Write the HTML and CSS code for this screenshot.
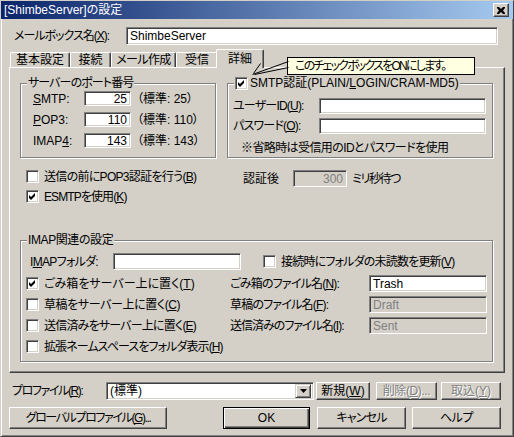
FILE: index.html
```html
<!DOCTYPE html>
<html lang="ja">
<head>
<meta charset="utf-8">
<title>[ShimbeServer]の設定</title>
<link rel="stylesheet" href="styles.css">
</head>
<body>
<div class="window">
  <div class="titlebar">
    <span class="title">[ShimbeServer]の設定</span>
    <span class="close"><svg width="8" height="7" viewBox="0 0 8 7"><path d="M0 0h2l2 2 2-2h2v1l-2 2.5 2 2.5v1h-2l-2-2-2 2h-2v-1l2-2.5-2-2.5z" fill="#000"/></svg></span>
  </div>
  <div class="content">
    <div class="mailbox">
      <span class="lbl-mailbox">メールボックス名(<u>X</u>):</span>
      <div class="input w-mailbox">ShimbeServer</div>
    </div>
    <div class="tabs">
      <div class="tab t-kihon">基本設定</div>
      <div class="tab t-setsu">接続</div>
      <div class="tab t-mail">メール作成</div>
      <div class="tab t-jushin">受信</div>
      <div class="tab sel t-shousai">詳細</div>
    </div>
    <div class="panel">
      <div class="groups">
        <div class="group g-port">
          <div class="legend ls-9">サーバーのポート番号</div>
          <div class="port-rows">
            <div class="prow"><span class="plabel"><u>S</u>MTP:</span><div class="input num">25</div><span class="std">（標準: 25）</span></div>
            <div class="prow"><span class="plabel"><u>P</u>OP3:</span><div class="input num">110</div><span class="std">（標準: 110）</span></div>
            <div class="prow"><span class="plabel">IMAP<u>4</u>:</span><div class="input num">143</div><span class="std">（標準: 143）</span></div>
          </div>
        </div>
        <div class="group g-auth">
          <div class="legend legend-cb"><span class="cb"><svg width="13" height="13" viewBox="0 0 13 13"><path d="M3 5l2 2 4-4v3l-4 4-2-2z" fill="#000"/></svg></span><span class="cbtext">SMTP認証(PLAIN/<u>L</u>OGIN/CRAM-MD5)</span></div>
          <div class="auth-rows">
            <div class="arow"><span class="alabel ls-8">ユーザーID(<u>U</u>):</span><div class="input w-auth"></div></div>
            <div class="arow"><span class="alabel ls-8">パスワード(<u>O</u>):</span><div class="input w-auth"></div></div>
          </div>
          <div class="note ls-6">※省略時は受信用のIDとパスワードを使用</div>
        </div>
      </div>

      <div class="pop-row">
        <div class="pop-left"><span class="cb"></span><span class="cbtext ls-7">送信の前にPOP3認証を行う(<u>B</u>)</span></div>
        <span class="after-lbl">認証後</span>
        <div class="input disabled num w-ms">300</div>
        <span class="ms ls-14">ミリ秒待つ</span>
      </div>
      <div class="esmtp-row"><span class="cb"><svg width="13" height="13" viewBox="0 0 13 13"><path d="M3 5l2 2 4-4v3l-4 4-2-2z" fill="#000"/></svg></span><span class="cbtext ls-9">ESMTPを使用(<u>K</u>)</span></div>

      <div class="group g-imap">
        <div class="legend ls-4">IMAP関連の設定</div>
        <div class="irow irow-first">
          <span class="ilabel ls-7">I<u>M</u>APフォルダ:</span>
          <div class="input w-folder"></div>
          <span class="cb cb-unread"></span><span class="cbtext ls-8">接続時にフォルダの未読数を更新(<u>V</u>)</span>
        </div>
        <div class="irow">
          <div class="icheck"><span class="cb"><svg width="13" height="13" viewBox="0 0 13 13"><path d="M3 5l2 2 4-4v3l-4 4-2-2z" fill="#000"/></svg></span><span class="cbtext">ごみ箱をサーバー上に置く(<u>T</u>)</span></div>
          <span class="flabel ls-8">ごみ箱のファイル名(<u>N</u>):</span>
          <div class="input w-file">Trash</div>
        </div>
        <div class="irow">
          <div class="icheck"><span class="cb"></span><span class="cbtext ls-4">草稿をサーバー上に置く(<u>C</u>)</span></div>
          <span class="flabel ls-8">草稿のファイル名(<u>F</u>):</span>
          <div class="input disabled w-file">Draft</div>
        </div>
        <div class="irow">
          <div class="icheck"><span class="cb"></span><span class="cbtext ls-8">送信済みをサーバー上に置く(<u>E</u>)</span></div>
          <span class="flabel ls-10">送信済みのファイル名(<u>I</u>):</span>
          <div class="input disabled w-file">Sent</div>
        </div>
        <div class="irow irow-last">
          <div class="icheck"><span class="cb"></span><span class="cbtext ls-9">拡張ネームスペースをフォルダ表示(<u>H</u>)</span></div>
        </div>
      </div>
    </div>

    <div class="profile-row">
      <span class="prof-lbl ls-14">プロファイル(<u>R</u>):</span>
      <div class="input combo"><span class="combo-text">(標準)</span><span class="combo-btn"><svg width="7" height="4" viewBox="0 0 7 4"><path d="M0 0h7l-3.5 4z" fill="#000"/></svg></span></div>
      <div class="btn b-new">新規(<u>W</u>)</div>
      <div class="btn dis b-del ls-4">削除(<u>D</u>)...</div>
      <div class="btn dis b-imp">取込(<u>Y</u>)</div>
    </div>
    <div class="button-row">
      <div class="btn b-global ls-14">グローバルプロファイル(<u>G</u>)...</div>
      <div class="btn default b-ok">OK</div>
      <div class="btn b-cancel ls-8">キャンセル</div>
      <div class="btn b-help ls-4">ヘルプ</div>
    </div>
  </div>

  <div class="tooltip">このチェックボックスをONにします。</div>
  <svg class="pointer" width="44" height="20" viewBox="0 0 44 20">
    <path d="M40.5 3.5L4.5 16.5M40.5 9.5L6.5 16.5M12.5 5.5L5.5 15.5" stroke="#000" stroke-width="1" fill="none"/>
  </svg>
</div>
</body>
</html>
```

FILE: styles.css
```css
* { box-sizing: border-box; }
html, body { margin: 0; padding: 0; }
body {
  width: 514px;
  height: 437px;
  overflow: hidden;
  background: #d4d0c8;
  font-family: "Liberation Sans", "Noto Sans CJK JP", sans-serif;
  font-size: 12px;
  line-height: 14px;
  color: #000;
  font-feature-settings: "palt";
}
u { text-decoration: underline; text-underline-offset: 1px; text-decoration-thickness: 1px; }

/* letter-spacing tweaks to approximate the narrow bitmap UI font */
.ls-4 { letter-spacing: -0.4px; }
.ls-6 { letter-spacing: -0.6px; }
.ls-7 { letter-spacing: -0.7px; }
.ls-8 { letter-spacing: -0.8px; }
.ls-9 { letter-spacing: -0.9px; }
.ls-10 { letter-spacing: -1px; }
.ls-14 { letter-spacing: -1.4px; }

.window {
  position: relative;
  width: 514px;
  height: 437px;
  background: #d4d0c8;
  border: 1px solid;
  border-color: #d4d0c8 #404040 #404040 #d4d0c8;
  box-shadow: inset 1px 1px #fff, inset -1px -1px #808080;
}

/* title bar */
.titlebar {
  height: 18px;
  display: flex;
  align-items: center;
  justify-content: space-between;
  padding: 0 4px 0 3px;
  background: linear-gradient(to right, #0a246a, #a6caf0);
  color: #fff;
}
.title { white-space: nowrap; }
.close {
  width: 16px;
  height: 14px;
  background: #d4d0c8;
  border: 1px solid;
  border-color: #fff #404040 #404040 #fff;
  box-shadow: inset -1px -1px #808080;
  display: flex;
  align-items: center;
  justify-content: center;
}

.content { padding: 0 8px; }

/* mailbox */
.mailbox { display: flex; align-items: center; margin-top: 8px; height: 18px; }
.lbl-mailbox { margin-left: 5px; width: 112px; white-space: nowrap; letter-spacing: -1px; }
.w-mailbox { width: 372px; height: 18px; }

/* generic sunken input */
.input {
  background: #fff;
  border: 1px solid;
  border-color: #808080 #fff #fff #808080;
  box-shadow: inset 1px 1px #404040, inset -1px -1px #d4d0c8;
  padding: 0 3px;
  display: flex;
  align-items: center;
  white-space: nowrap;
  overflow: hidden;
  flex: none;
}
.input.num { justify-content: flex-end; }
.input.disabled { background: #d4d0c8; color: #808080; }

/* tabs */
.tabs { display: flex; height: 18px; margin-top: 4px; margin-left: 1px; align-items: flex-start; }
.tab {
  height: 15px;
  margin-top: 3px;
  border-top: 1px solid #fff;
  border-left: 1px solid #fff;
  border-right: 1px solid #404040;
  box-shadow: inset -1px 0 #808080;
  border-radius: 2px 2px 0 0;
  display: flex;
  justify-content: center;
  align-items: center;
  white-space: nowrap;
  background: #d4d0c8;
  flex: none;
}
.t-kihon { width: 60px; }
.t-setsu { width: 41px; }
.t-mail { width: 65px; letter-spacing: -0.6px; }
.t-jushin { width: 42px; }
.tab.sel {
  position: relative;
  z-index: 1;
  width: 48px;
  height: 19px;
  margin-top: 0;
  margin-left: -2px;
  align-items: flex-start;
  padding-top: 2px;
}

/* panel */
.panel {
  width: 496px;
  height: 306px;
  border-top: 1px solid #fff;
  border-left: 1px solid #fff;
  border-right: 1px solid #404040;
  border-bottom: 1px solid #404040;
  box-shadow: inset -1px -1px #808080;
  padding: 0 10px;
}

/* group box */
.group {
  border: 1px solid #808080;
  box-shadow: inset 1px 1px #fff, 1px 1px #fff;
}
.legend {
  height: 14px;
  margin: -8px 0 0 6px;
  padding: 0 1px;
  width: max-content;
  background: #d4d0c8;
  display: flex;
  align-items: center;
  white-space: nowrap;
}
.groups { display: flex; gap: 11px; margin-top: 15px; }
.g-port { width: 196px; height: 75px; }
.g-auth { width: 266px; height: 75px; }

.port-rows { display: flex; flex-direction: column; gap: 6px; margin-top: 1px; padding-left: 12px; }
.prow { display: flex; align-items: center; height: 15px; }
.plabel { width: 51px; }
.prow .input { width: 47px; height: 15px; }
.std { margin-left: 6px; white-space: nowrap; }

.legend-cb { gap: 2px; }
.auth-rows { display: flex; flex-direction: column; gap: 4px; margin-top: 8px; padding-left: 5px; }
.arow { display: flex; align-items: center; height: 16px; }
.alabel { width: 86px; white-space: nowrap; }
.w-auth { width: 167px; height: 16px; }
.note { margin-top: 7px; padding-left: 13px; height: 14px; white-space: nowrap; }

/* checkbox */
.cb {
  width: 13px;
  height: 13px;
  flex: none;
  background: #fff;
  border: 1px solid;
  border-color: #808080 #fff #fff #808080;
  box-shadow: inset 1px 1px #404040, inset -1px -1px #d4d0c8;
  position: relative;
  display: block;
}
.cb svg { position: absolute; left: -1px; top: -1px; }
.cbtext { white-space: nowrap; }

.pop-row { display: flex; align-items: center; height: 17px; margin-top: 12px; padding-left: 6px; }
.pop-left { width: 217px; height: 13px; align-self: flex-start; display: flex; align-items: center; gap: 5px; }
.after-lbl { width: 50px; }
.w-ms { width: 54px; height: 17px; }
.ms { margin-left: 5px; white-space: nowrap; }

.esmtp-row { display: flex; align-items: center; gap: 5px; height: 13px; margin-top: 3px; padding-left: 6px; }

/* IMAP group */
.g-imap { width: 473px; height: 122px; margin-top: 37px; }
.irow { display: flex; align-items: center; height: 17px; margin-top: 4px; padding-left: 5px; }
.irow-first { margin-top: 6px; }
.irow-first + .irow { margin-top: 5px; }
.irow-last { margin-top: 6px; height: 13px; }
.ilabel { margin-left: 4px; width: 83px; white-space: nowrap; }
.w-folder { width: 128px; height: 17px; }
.cb-unread { margin-left: 22px; margin-right: 5px; }
.icheck { width: 204px; display: flex; align-items: center; gap: 5px; }
.flabel { width: 139px; white-space: nowrap; }
.w-file { width: 118px; height: 17px; }

/* bottom */
.profile-row { display: flex; align-items: center; height: 18px; margin-top: 9px; }
.prof-lbl { margin-left: 3px; width: 94px; white-space: nowrap; }
.combo { width: 208px; height: 18px; padding: 0 2px 0 3px; justify-content: space-between; }
.combo-btn {
  width: 16px;
  height: 14px;
  background: #d4d0c8;
  border: 1px solid;
  border-color: #d4d0c8 #404040 #404040 #d4d0c8;
  box-shadow: inset 1px 1px #fff, inset -1px -1px #808080;
  display: flex;
  align-items: center;
  justify-content: center;
}

.btn {
  flex: none;
  display: flex;
  align-items: center;
  justify-content: center;
  white-space: nowrap;
  background: #d4d0c8;
  border: 1px solid;
  border-color: #fff #404040 #404040 #fff;
  box-shadow: inset -1px -1px #808080;
}
.btn.dis { color: #808080; text-shadow: 1px 1px #fff; }
.btn.default {
  border: 1px solid #000;
  box-shadow: inset 1px 1px #fff, inset -1px -1px #404040, inset -2px -2px #808080;
}
.profile-row .btn { height: 18px; }
.b-new { width: 54px; margin-left: 2px; }
.b-del { width: 61px; margin-left: 6px; }
.b-imp { width: 60px; margin-left: 4px; }

.button-row { display: flex; height: 22px; margin-top: 7px; }
.button-row .btn { height: 22px; }
.b-global { width: 158px; }
.b-ok { width: 87px; margin-left: 56px; }
.b-cancel { width: 89px; margin-left: 7px; }
.b-help { width: 89px; margin-left: 6px; }

/* tooltip overlay */
.tooltip {
  position: absolute;
  left: 286px;
  top: 56px;
  width: 188px;
  height: 18px;
  background: #ffffe1;
  border: 1px solid #000;
  padding-left: 7px;
  display: flex;
  align-items: center;
  white-space: nowrap;
  letter-spacing: -1.8px;
  z-index: 3;
}
.pointer {
  position: absolute;
  left: 247px;
  top: 57px;
  z-index: 3;
}
```
